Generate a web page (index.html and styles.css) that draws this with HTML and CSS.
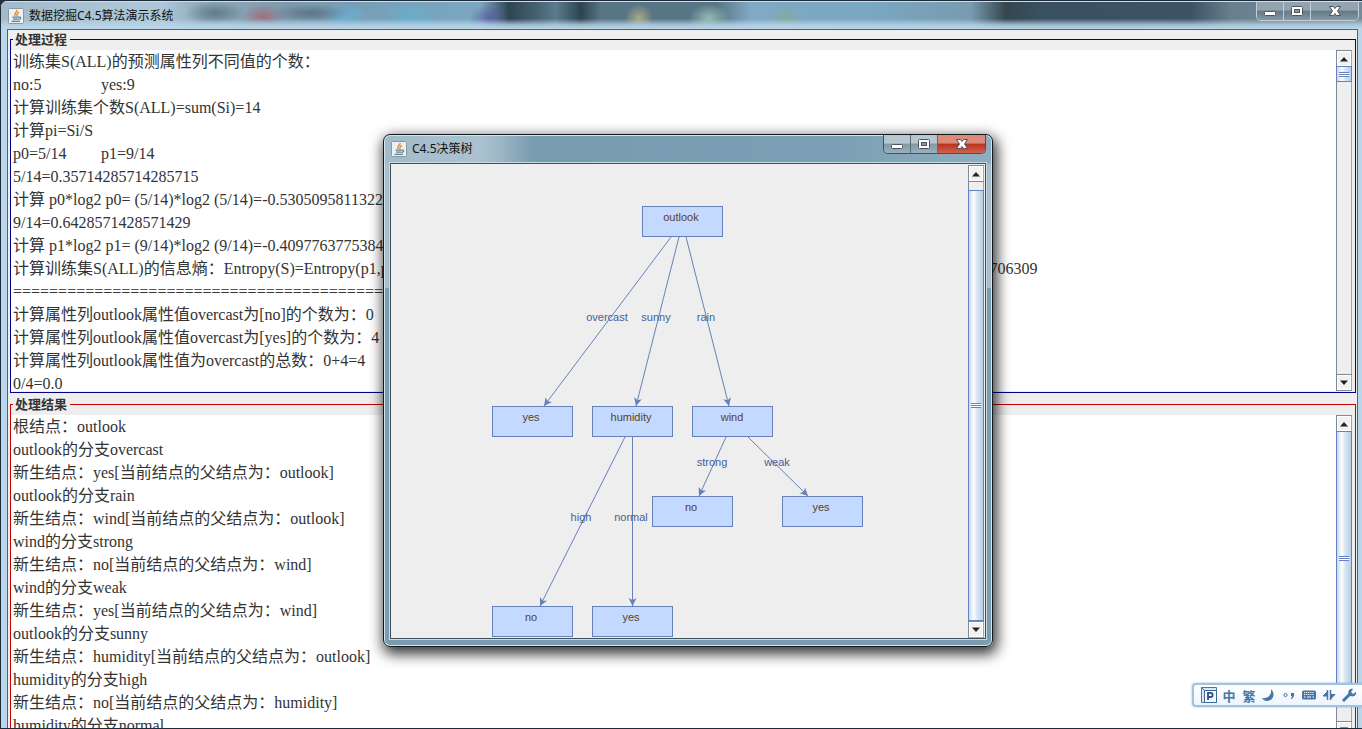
FILE: index.html
```html
<!DOCTYPE html>
<html lang="zh-CN">
<head>
<meta charset="utf-8">
<title>数据挖掘C4.5算法演示系统</title>
<link rel="stylesheet" href="styles.css">
</head>
<body>
<svg class="defs" aria-hidden="true">
  <symbol id="java" viewBox="0 0 16 16">
    <rect x=".5" y=".5" width="15" height="15" rx="1" fill="#edf1f4" stroke="#8b969e"/>
    <path d="M9 2C9.500 4.500 5.500 5 7 8M10.500 4C10.500 5.500 8 6 9 8" fill="none" stroke="#e08a2c" stroke-width="1.500"/>
    <path d="M4.500 9.200h6.500M5 11.200h5.500M3.500 13.300h8.500M11 9.200c2.500-.5 2 2-.3 2.200" fill="none" stroke="#5e7f99" stroke-width="1.200"/>
  </symbol>
  <symbol id="min" viewBox="0 0 16 12"><rect x="2.500" y="6.500" width="11" height="4" rx="1" fill="#fff" stroke="#4a5560"/></symbol>
  <symbol id="max" viewBox="0 0 16 12"><rect x="2.500" y="1.500" width="11" height="9" rx="1" fill="#fff" stroke="#4a5560"/><rect x="5.500" y="4.500" width="5" height="3" fill="#8a9aa6" stroke="#4a5560"/></symbol>
  <symbol id="close" viewBox="0 0 16 12"><path d="M2.500 1.500h4L8 3.500l1.500-2h4L10.500 6l3 4.500h-4L8 8.500l-1.500 2h-4l3-4.500z" fill="#fff" stroke="#4a5560"/></symbol>
  <symbol id="up" viewBox="0 0 10 6"><path d="M1 5.500L5 1l4 4.500z" fill="#222"/></symbol>
  <symbol id="down" viewBox="0 0 10 6"><path d="M1 .5L5 5 9 .5z" fill="#222"/></symbol>
</svg>

<div class="window">
  <header class="titlebar main-title">
    <svg class="app-icon"><use href="#java"/></svg>
    <h1>数据挖掘C4.5算法演示系统</h1>
    <div class="caption">
      <button aria-label="最小化"><svg><use href="#min"/></svg></button>
      <button aria-label="最大化"><svg><use href="#max"/></svg></button>
      <button class="close" aria-label="关闭"><svg><use href="#close"/></svg></button>
    </div>
  </header>
  <main class="content">
    <fieldset class="pane process">
      <legend>处理过程</legend>
      <div class="scroller">
        <textarea aria-label="处理过程" wrap="off" readonly>
训练集S(ALL)的预测属性列不同值的个数：
no:5	yes:9
计算训练集个数S(ALL)=sum(Si)=14
计算pi=Si/S
p0=5/14	p1=9/14
5/14=0.35714285714285715
计算 p0*log2 p0= (5/14)*log2 (5/14)=-0.5305095811322292
9/14=0.6428571428571429
计算 p1*log2 p1= (9/14)*log2 (9/14)=-0.4097763775384015
计算训练集S(ALL)的信息熵：Entropy(S)=Entropy(p1,p2)=-(5/14)*log2(5/14)-(9/14)*log2 (9/14)=0.530509581132+0.409776377538=0.9402859586706309
============================================================
计算属性列outlook属性值overcast为[no]的个数为：0
计算属性列outlook属性值overcast为[yes]的个数为：4
计算属性列outlook属性值为overcast的总数：0+4=4
0/4=0.0</textarea>
        <div class="scrollbar">
          <button aria-label="向上"><svg><use href="#up"/></svg></button>
          <div class="track"><div class="thumb short"><i></i></div></div>
          <button aria-label="向下"><svg><use href="#down"/></svg></button>
        </div>
      </div>
    </fieldset>
    <fieldset class="pane result">
      <legend>处理结果</legend>
      <div class="scroller">
        <textarea aria-label="处理结果" wrap="off" readonly>
根结点：outlook
outlook的分支overcast
新生结点：yes[当前结点的父结点为：outlook]
outlook的分支rain
新生结点：wind[当前结点的父结点为：outlook]
wind的分支strong
新生结点：no[当前结点的父结点为：wind]
wind的分支weak
新生结点：yes[当前结点的父结点为：wind]
outlook的分支sunny
新生结点：humidity[当前结点的父结点为：outlook]
humidity的分支high
新生结点：no[当前结点的父结点为：humidity]
humidity的分支normal</textarea>
        <div class="scrollbar">
          <button aria-label="向上"><svg><use href="#up"/></svg></button>
          <div class="track"><div class="thumb long"><i></i></div></div>
          <button aria-label="向下"><svg><use href="#down"/></svg></button>
        </div>
      </div>
    </fieldset>
  </main>
</div>

<section class="dialog">
  <header class="titlebar">
    <svg class="app-icon"><use href="#java"/></svg>
    <h2>C4.5决策树</h2>
    <div class="caption">
      <button aria-label="最小化"><svg><use href="#min"/></svg></button>
      <button aria-label="最大化"><svg><use href="#max"/></svg></button>
      <button class="close red" aria-label="关闭"><svg><use href="#close"/></svg></button>
    </div>
  </header>
  <div class="dialog-body">
    <svg class="tree" viewBox="0 0 576 471" preserveAspectRatio="xMinYMin slice">
      <defs>
        <marker id="arrow" markerUnits="userSpaceOnUse" markerWidth="10" markerHeight="10" refX="8" refY="4" orient="auto"><path d="M0 0L8 4 0 8 2 4z" fill="#6482b9"/></marker>
      </defs>
      <g class="edges">
        <path d="M279 71L152 240"/><path d="M287 71L244 240"/><path d="M294 71L337 240"/>
        <path d="M233 271L148 440"/><path d="M240.500 271V440"/>
        <path d="M334 271L307 330"/><path d="M356 271L416 330"/>
      </g>
      <g class="nodes">
        <rect x="250.500" y="40.500" width="80" height="30"/>
        <rect x="100.500" y="240.500" width="80" height="30"/>
        <rect x="200.500" y="240.500" width="80" height="30"/>
        <rect x="300.500" y="240.500" width="80" height="30"/>
        <rect x="260.500" y="330.500" width="80" height="30"/>
        <rect x="390.500" y="330.500" width="80" height="30"/>
        <rect x="100.500" y="440.500" width="80" height="30"/>
        <rect x="200.500" y="440.500" width="80" height="30"/>
      </g>
      <g class="node-text">
        <text x="289" y="55">outlook</text>
        <text x="139" y="255">yes</text><text x="239" y="255">humidity</text><text x="340" y="255">wind</text>
        <text x="299" y="345">no</text><text x="429" y="345">yes</text>
        <text x="139" y="455">no</text><text x="239" y="455">yes</text>
      </g>
      <g class="edge-text">
        <text x="215" y="155">overcast</text><text x="264" y="155">sunny</text><text x="314" y="155">rain</text>
        <text x="320" y="300">strong</text><text x="385" y="300">weak</text>
        <text x="189" y="355">high</text><text x="239" y="355">normal</text>
      </g>
    </svg>
    <div class="scrollbar">
      <button aria-label="向上"><svg><use href="#up"/></svg></button>
      <div class="track"><div class="thumb end"><i></i></div></div>
      <button aria-label="向下"><svg><use href="#down"/></svg></button>
    </div>
  </div>
</section>

<div class="ime">
  <button aria-label="输入法"><svg viewBox="0 0 16 16"><path d="M.5.5h15v15H.5z" fill="#dce8f4" stroke="#4a76a8"/><path d="M3.500 3.500h12v12h-12zM.5.5l3 3" fill="#f5f9fd" stroke="#3d6698"/><path d="M7 13V5.800h2.500a2 2 0 0 1 0 4.200H7" fill="none" stroke="#284f86" stroke-width="1.800"/></svg></button>
  <button>中</button>
  <button>繁</button>
  <button aria-label="半角"><svg viewBox="0 0 16 16"><path d="M10 2c5 5 2 12-4 12-2 0-4-1-5-3 6 1 10-3 9-9z" fill="#4477a8"/></svg></button>
  <button aria-label="标点"><svg viewBox="0 0 16 16"><circle cx="4.500" cy="8" r="1.600" fill="none" stroke="#4477a8"/><path d="M10 6h3v3l-2 3h-1l1-3h-1z" fill="#4477a8"/></svg></button>
  <button aria-label="软键盘"><svg viewBox="0 0 16 16"><rect x="1" y="3.500" width="14" height="9" rx="1.500" fill="#4477a8"/><path d="M3 5.500h10M3 7.500h10" stroke="#fff" stroke-dasharray="1.200 .9"/><path d="M3 10h1.500M6 10h4M11.500 10H13" stroke="#fff"/></svg></button>
  <button aria-label="移动"><svg viewBox="0 0 16 16"><path d="M6.500 3v10M9.500 3v10" stroke="#4477a8" stroke-width="1.500"/><path d="M2 9l4-4v4zM14 7.500l-4 4v-4z" fill="#4477a8" stroke="#4477a8"/></svg></button>
  <button aria-label="设置"><svg viewBox="0 0 16 16"><path d="M2 14L9 7" stroke="#4477a8" stroke-width="3"/><path d="M8 8C6 4 9 1 12 2l-2 3 2 2 3-2c1 4-4 6-7 3z" fill="#4477a8"/></svg></button>
</div>
</body>
</html>
```
FILE: styles.css
```css
* { box-sizing: border-box; }
html, body { margin: 0; height: 100%; overflow: hidden; background: #26303c; }
body { font-family: "Noto Sans", "Noto Sans CJK SC", sans-serif; font-size: 12px; color: #111; }
button { padding: 0; margin: 0; border: 0; background: none; font: inherit; display: flex; align-items: center; justify-content: center; }
.defs { position: absolute; width: 0; height: 0; }

.window {
  height: 100vh;
  display: flex;
  flex-direction: column;
  padding-right: 4px;
  border: 1px solid #1d2a3a;
  border-right: 0;
  border-radius: 7px 0 0 0;
  background: #b9d6ea;
  overflow: hidden;
}
.titlebar { display: flex; align-items: center; flex: none; height: 28px; }
.titlebar h1, .titlebar h2 { flex: 1; margin: 0; font-size: 12px; font-weight: 400; line-height: 18px; }
.app-icon { width: 16px; height: 16px; margin: 0 5px 0 7px; }
.main-title {
  margin-right: -4px;
  border-top: 1px solid #cfdde6;
  background:
    linear-gradient(180deg, transparent 62%, #b9d6eacc 85%, #b9d6ea),
    radial-gradient(30px 12px at 214px 11px, #4c6271aa, transparent),
    radial-gradient(22px 12px at 262px 14px, #a55f70bb, transparent),
    radial-gradient(40px 9px at 310px 11px, #4c6271aa, transparent),
    radial-gradient(24px 12px at 345px 14px, #66b5e0bb, transparent),
    radial-gradient(28px 14px at 410px 14px, #62b2d2bb, transparent),
    radial-gradient(20px 14px at 488px 16px, #5b55a5bb, transparent),
    radial-gradient(14px 14px at 638px 16px, #c5bc82bb, transparent),
    radial-gradient(20px 14px at 708px 16px, #a3cdbdcc, transparent),
    radial-gradient(18px 14px at 784px 16px, #84aa96bb, transparent),
    linear-gradient(90deg, #a3bac9 0, #afc8d9 160px, #8fabbc 200px, #7d9aad 290px, #779eb6 350px, #7aa7c0 480px, #2e4552 508px, #456171 535px, #5b7c8d 555px, #2c4450 580px, #587585 600px, #587585 715px, #80a9c5 750px, #7aa7c1 870px, #789bb0 970px, #34464f 1005px, #3a5161 1040px, #3c5363 1190px, #687f8e 1230px, #778c99 1362px);
}
.caption {
  display: flex;
  align-self: flex-start;
  height: 19px;
  margin-right: 3px;
  border: 1px solid #c2cfd8;
  border-top: 0;
  border-radius: 0 0 5px 5px;
  overflow: hidden;
}
.caption button { width: 27px; background: linear-gradient(#93a4af 45%, #647986 50%, #8499a5); border-right: 1px solid #c2cfd8; }
.caption .close { width: 47px; border-right: 0; }
.caption svg { width: 16px; height: 12px; }

.content {
  flex: 1;
  min-height: 0;
  display: grid;
  grid-template-rows: minmax(0, 1fr) 347px;
  margin: 0 0 -14px 6px;
  border: 1px solid #53636e;
  border-bottom: 0;
  background: #eee;
  overflow: hidden;
}
.pane { display: flex; flex-direction: column; min-width: 0; min-height: 0; margin: 1px 1px 2px 2px; padding: 0 3px 1px 0; border: 1px solid #00008b; }
.result { border-color: #c80000; }
.pane legend { margin-left: 2px; padding: 0 3px 0 2px; font-size: 13px; font-weight: 700; line-height: 16px; color: #333; }
.scroller { display: flex; height: 100%; padding-top: 3px; }
textarea {
  flex: 1;
  min-width: 0;
  margin: 0;
  padding: 0 2px;
  border: 0;
  outline: 0;
  resize: none;
  overflow: hidden;
  background: #fff;
  color: #333;
  font-family: "Liberation Serif", "Noto Sans CJK SC", serif;
  font-size: 16px;
  line-height: 23px;
  tab-size: 88px;
}

.scrollbar { flex: none; width: 16px; display: flex; flex-direction: column; border: 1px solid #7a8a99; border-right-color: #9aa7b3; background: #eee; }
.scrollbar button { flex: none; height: 15px; background: #f1f1f1; border: 1px solid #fff; }
.scrollbar button svg { width: 10px; height: 6px; }
.track { flex: 1; display: flex; flex-direction: column; min-height: 0; margin: 0 -1px; border: solid #7a8a99; border-width: 1px 0; }
.thumb { display: flex; align-items: center; justify-content: center; border: 1px solid #6382bf; background: linear-gradient(90deg, #c8d8ee, #fff 35%, #dce8f7 55%, #b8cfe5); }
.thumb i { width: 10px; height: 5px; border: solid #6382bf; border-width: 1px 0; background: linear-gradient(#fff 1px, #6382bf 1px, #6382bf 2px, #fff 2px); }
.short { height: 16px; margin-top: -1px; }
.long { height: 88%; margin-top: -1px; }
.end { flex: 1; margin-top: 8px; }

.dialog {
  position: absolute;
  left: 383px;
  top: 134px;
  width: 610px;
  height: 513px;
  display: flex;
  flex-direction: column;
  padding: 0 6px 7px;
  border: 1px solid #101820;
  border-radius: 7px;
  background: linear-gradient(90deg, #a2bbc9, #abc3d0 95px, #9db7c6 115px, #789bb0 150px, #7c9fb5 450px, #8eaec0) top / 100% 29px no-repeat, linear-gradient(#a9bfcb 30%, #7b9caf 30%);
  box-shadow: inset 0 0 0 1px #d5e5ee, 2px 5px 14px 2px #000c;
}
.dialog .app-icon { margin-left: 1px; }
.dialog .caption { margin-right: 0; border-color: #43515c; }
.dialog .caption button { border-color: #5a6b77; background: linear-gradient(#b7c7d1 45%, #8198a6 50%, #9db1bd); }
.dialog .caption .red { background: linear-gradient(#dc8b79 45%, #b8331f 50%, #d4614b); }
.dialog-body { flex: 1; min-height: 0; display: flex; padding: 1px 1px 0; border: 1px solid #3f505d; outline: 1px solid #c8dae5; background: #eee; }
.dialog-body .scrollbar { border-bottom-color: #9aa7b3; }
.tree { flex: 1; min-width: 0; height: 472px; padding-top: 1px; font-family: "Liberation Sans", sans-serif; font-size: 11px; text-anchor: middle; }
.edges path { fill: none; stroke: #6482b9; marker-end: url(#arrow); }
.nodes rect { fill: #c3d9ff; stroke: #6482b9; }
.node-text { fill: #5c3f1c; }
.edge-text { fill: #446299; }

.ime {
  position: absolute;
  right: 0;
  top: 683px;
  display: flex;
  align-items: center;
  height: 24px;
  padding: 0 3px 0 5px;
  border: 2px solid #9fc3e2;
  border-right: 0;
  border-radius: 4px 0 0 4px;
  background: linear-gradient(#fff, #eef4fa);
  box-shadow: 0 0 2px #7ba6cc;
}
.ime button { width: 20px; height: 20px; color: #4477a8; font-size: 13px; font-weight: 700; }
.ime svg { width: 16px; height: 16px; }
```
